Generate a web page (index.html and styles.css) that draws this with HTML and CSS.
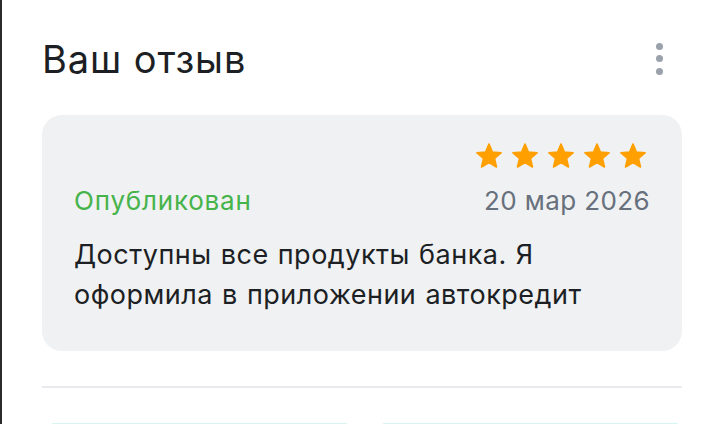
FILE: index.html
```html
<!DOCTYPE html>
<html>
<head>
    <title> Ваш отзыв </title>
    <link rel="stylesheet" href="styles.css">
</head>
<body>
    <div class="panel">
        <div class="header">
            <h2> Ваш отзыв </h2>
            <button class="more" type="button" aria-label="Меню">
                <span class="dot"></span>
                <span class="dot"></span>
                <span class="dot"></span>
            </button>
        </div>

        <div class="review">
            <div class="stars">
                <svg class="star" viewBox="1.2 1.2 21.6 20.6"><path d="M12 17.27L18.18 21l-1.64-7.03L22 9.24l-7.19-.61L12 2 9.19 8.63 2 9.24l5.46 4.73L5.82 21z"/></svg>
                <svg class="star" viewBox="1.2 1.2 21.6 20.6"><path d="M12 17.27L18.18 21l-1.64-7.03L22 9.24l-7.19-.61L12 2 9.19 8.63 2 9.24l5.46 4.73L5.82 21z"/></svg>
                <svg class="star" viewBox="1.2 1.2 21.6 20.6"><path d="M12 17.27L18.18 21l-1.64-7.03L22 9.24l-7.19-.61L12 2 9.19 8.63 2 9.24l5.46 4.73L5.82 21z"/></svg>
                <svg class="star" viewBox="1.2 1.2 21.6 20.6"><path d="M12 17.27L18.18 21l-1.64-7.03L22 9.24l-7.19-.61L12 2 9.19 8.63 2 9.24l5.46 4.73L5.82 21z"/></svg>
                <svg class="star" viewBox="1.2 1.2 21.6 20.6"><path d="M12 17.27L18.18 21l-1.64-7.03L22 9.24l-7.19-.61L12 2 9.19 8.63 2 9.24l5.46 4.73L5.82 21z"/></svg>
            </div>
            <div class="meta">
                <span class="status">Опубликован</span>
                <span class="date">20 мар 2026</span>
            </div>
            <p class="text">Доступны все продукты банка. Я оформила в приложении автокредит</p>
        </div>

        <hr class="divider">

        <div class="cards">
            <div class="card"></div>
            <div class="card"></div>
        </div>
    </div>
</body>
</html>
```

FILE: styles.css
```css
body {
    font-family: Inter, "Noto Sans", sans-serif;
    background-color: #fff;
    margin: 0;
}

.panel {
    border-left: 2px solid #2b2b2b;
    height: 424px;
    overflow: hidden;
    padding: 0 38px 0 40px;
    box-sizing: border-box;
}

.header {
    display: flex;
    justify-content: space-between;
    align-items: center;
    height: 115px;
}

h2 {
    margin: 0;
    margin-top: 2px;
    font-size: 38px;
    font-weight: 400;
    color: #1c1f24;
    letter-spacing: 0.9px;
}

.more {
    display: flex;
    flex-direction: column;
    gap: 5.5px;
    padding: 0;
    margin-right: 19px;
    margin-top: 2px;
    border: none;
    background: none;
}

.dot {
    width: 7px;
    height: 7px;
    border-radius: 50%;
    background-color: #9aa1ab;
}

.review {
    background-color: #f0f1f3;
    border-radius: 20px;
    padding: 28px 32px 36px 32px;
}

.stars {
    display: flex;
    justify-content: flex-end;
    gap: 10px;
    padding-right: 4px;
}

.star {
    width: 26px;
    height: 25px;
    fill: #ffa000;
    stroke: #ffa000;
    stroke-width: 1.4;
    stroke-linejoin: round;
}

.meta {
    display: flex;
    justify-content: space-between;
    align-items: baseline;
    margin-top: 17px;
    font-size: 26px;
    line-height: 31px;
    letter-spacing: 0.4px;
}

.status {
    color: #46b34b;
    letter-spacing: 0.8px;
}

.date {
    color: #67707c;
}

.text {
    margin: 19px 0 0 0;
    font-size: 27px;
    line-height: 40px;
    letter-spacing: 0.5px;
    word-spacing: 1px;
    color: #1c1f24;
    padding-right: 60px;
}

.divider {
    border: none;
    border-top: 2px solid #e9eaee;
    margin: 35px 0 0 0;
}

.cards {
    display: flex;
    gap: 36px;
    padding: 35px 4px 0 10px;
}

.card {
    flex: 1;
    height: 1px;
    background-color: #d6f5f3;
}
```
